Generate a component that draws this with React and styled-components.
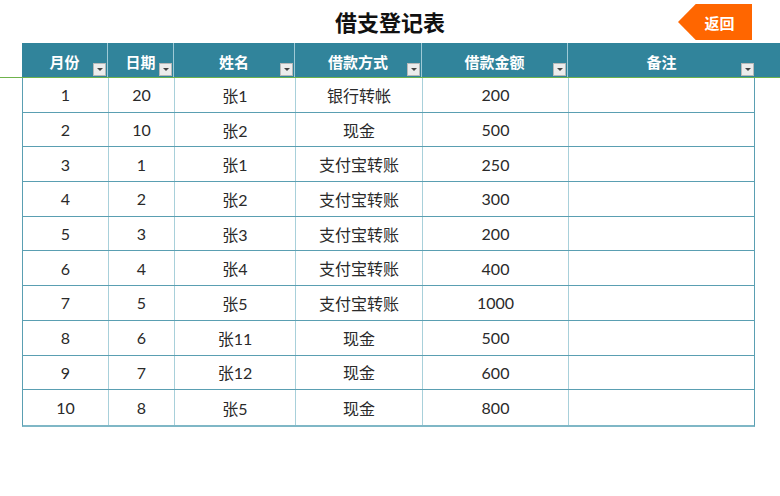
import React from "react";
import styled, { createGlobalStyle } from "styled-components";

const Global = createGlobalStyle`
  html, body { margin: 0; padding: 0; background: #fff; }
  body { font-family: "Noto Sans CJK SC", sans-serif; width: 780px; height: 496px; overflow: hidden; }
`;

const COLS = "86px 66px 121px 127px 146px 187px";

const Page = styled.div`
  width: 780px;
  height: 496px;
  display: flex;
  flex-direction: column;
`;

const TitleBar = styled.div`
  height: 43px;
  display: grid;
  grid-template-columns: 1fr auto 1fr;
  align-items: center;
  padding: 0 28px;
`;

const Title = styled.h1`
  grid-column: 2;
  margin: 0;
  font-family: "Noto Sans CJK SC", sans-serif;
  font-weight: 700;
  font-size: 22px;
  color: #111;
  line-height: 1;
  padding-bottom: 1px;
`;

const BackButton = styled.button`
  grid-column: 3;
  justify-self: end;
  align-self: start;
  margin-top: 4px;
  width: 74px;
  height: 36px;
  border: none;
  background: #ff6600;
  clip-path: polygon(24% 0, 100% 0, 100% 100%, 24% 100%, 0 50%);
  color: #fff;
  font-family: "Noto Sans CJK SC", sans-serif;
  font-weight: 700;
  font-size: 15px;
  padding: 0 0 0 9px;
  cursor: pointer;
`;

const HeaderBand = styled.div`
  padding-left: 22px;
  border-bottom: 1px solid #6fb34c;
  height: 35px;
  box-sizing: border-box;
`;

const HeaderRow = styled.div`
  display: grid;
  grid-template-columns: ${COLS};
  height: 34px;
  background: #31849b;
`;

const HeaderCell = styled.div`
  position: relative;
  display: flex;
  align-items: center;
  justify-content: center;
  color: #fff;
  font-weight: 700;
  font-size: 15px;
  padding-top: 2px;
  border-right: ${(p) => (p.$last ? "none" : "1px solid #9fcad6")};
`;

const FilterBtn = styled.span`
  position: absolute;
  right: 1px;
  bottom: 1px;
  width: 13px;
  height: 13px;
  box-sizing: border-box;
  background: #ececec;
  border: 1px solid #b8b8b8;
  display: flex;
  align-items: center;
  justify-content: center;
  &::after {
    content: "";
    border-left: 3px solid transparent;
    border-right: 3px solid transparent;
    border-top: 3px solid #444;
  }
`;

const Body = styled.div`
  padding-left: 22px;
`;

const Table = styled.div`
  width: 733px;
  box-sizing: border-box;
  border-left: 1px solid #5a9fb2;
  border-right: 1px solid #5a9fb2;
  border-bottom: 2px solid #7fb7c6;
`;

const Row = styled.div`
  display: grid;
  grid-template-columns: ${COLS};
  height: 34.7px;
  box-sizing: border-box;
  border-bottom: ${(p) => (p.$last ? "none" : "1px solid #5a9fb2")};
`;

const Cell = styled.div`
  display: flex;
  align-items: center;
  justify-content: center;
  font-family: "Lato", "Noto Sans CJK SC", sans-serif;
  font-size: 16px;
  color: #2a2a2a;
  border-right: ${(p) => (p.$last ? "none" : "1px solid #a8d0da")};
`;

const headers = ["月份", "日期", "姓名", "借款方式", "借款金额", "备注"];
const rows = [
  ["1", "20", "张1", "银行转帐", "200"],
  ["2", "10", "张2", "现金", "500"],
  ["3", "1", "张1", "支付宝转账", "250"],
  ["4", "2", "张2", "支付宝转账", "300"],
  ["5", "3", "张3", "支付宝转账", "200"],
  ["6", "4", "张4", "支付宝转账", "400"],
  ["7", "5", "张5", "支付宝转账", "1000"],
  ["8", "6", "张11", "现金", "500"],
  ["9", "7", "张12", "现金", "600"],
  ["10", "8", "张5", "现金", "800"],
];

export default function App() {
  return (
    <Page>
      <Global />
      <TitleBar>
        <Title>借支登记表</Title>
        <BackButton>返回</BackButton>
      </TitleBar>
      <HeaderBand>
        <HeaderRow>
          {headers.map((h, i) => (
            <HeaderCell key={h} $last={i === headers.length - 1}>
              {h}
              <FilterBtn />
            </HeaderCell>
          ))}
        </HeaderRow>
      </HeaderBand>
      <Body>
        <Table>
          {rows.map((r, ri) => (
            <Row key={ri} $last={ri === rows.length - 1}>
              {[...r, ""].map((c, ci) => (
                <Cell key={ci} $last={ci === 5}>
                  {c}
                </Cell>
              ))}
            </Row>
          ))}
        </Table>
      </Body>
    </Page>
  );
}
